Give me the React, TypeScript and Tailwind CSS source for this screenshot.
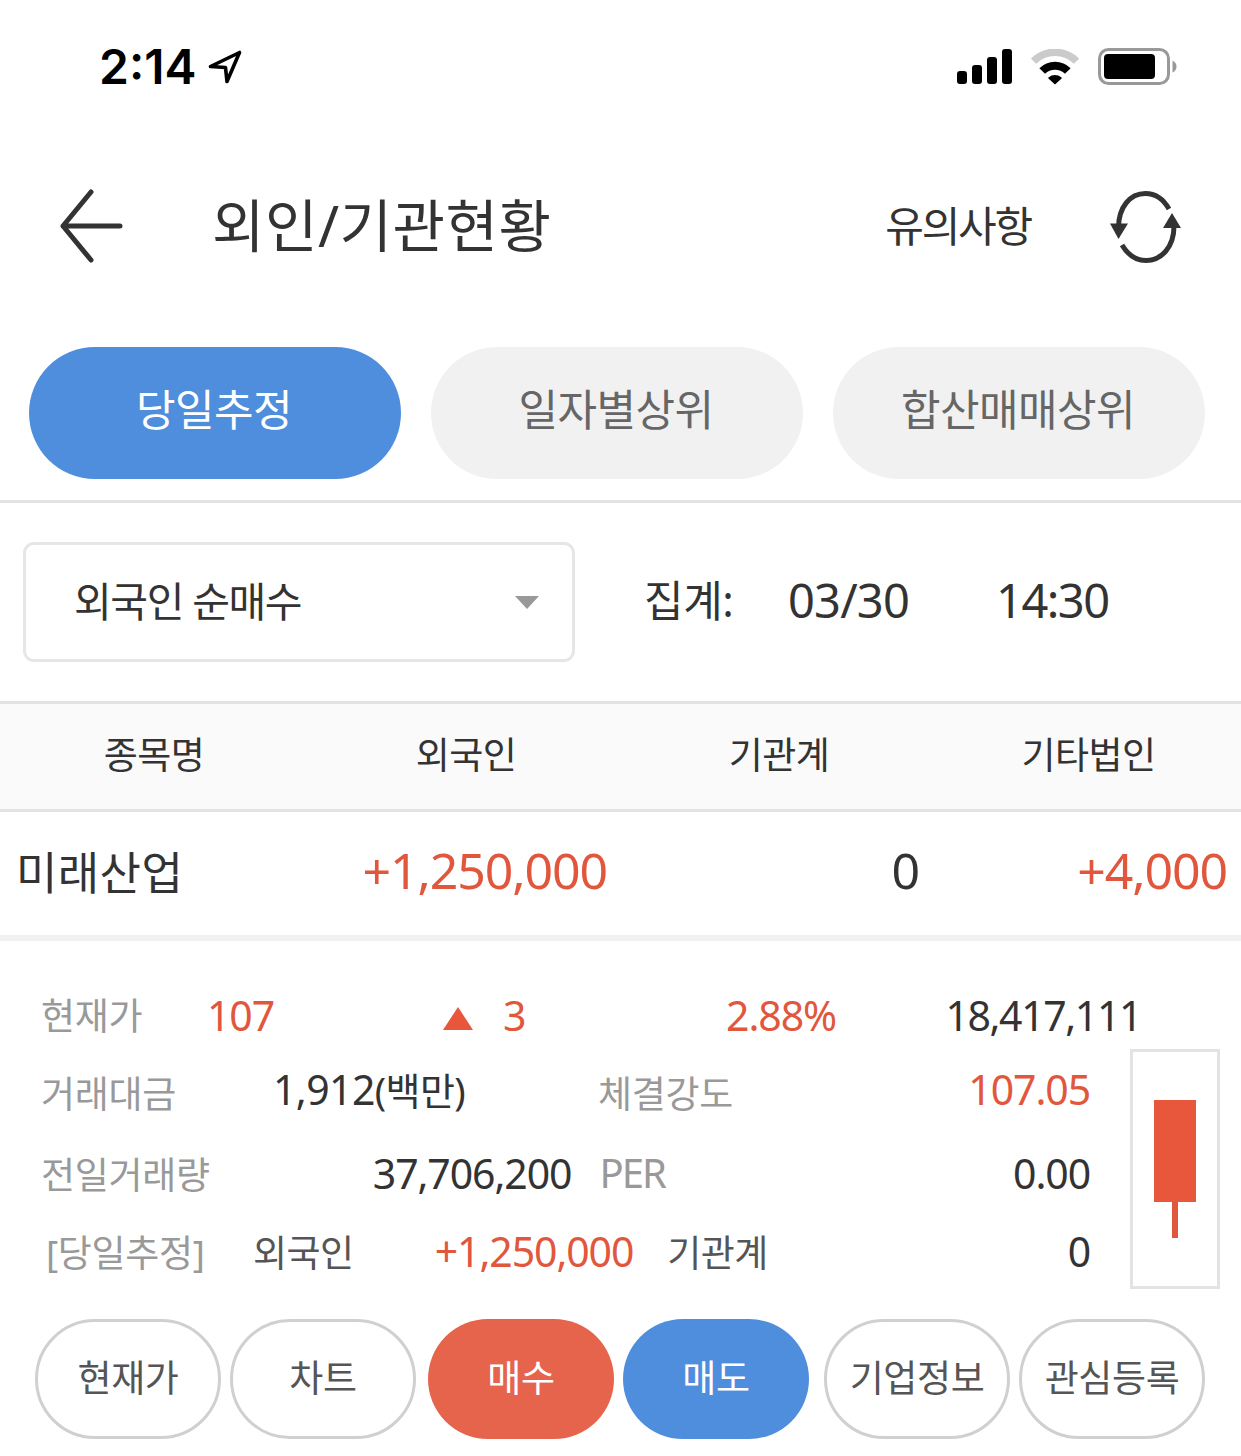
import React from "react";
import { clsx } from "clsx";

type TabItem = { label: string; active?: boolean };
type Action = { label: string; kind?: "buy" | "sell"; className: string };

const tabs: TabItem[] = [
  { label: "당일추정", active: true },
  { label: "일자별상위" },
  { label: "합산매매상위" },
];

const actions: Action[] = [
  { label: "현재가", className: "" },
  { label: "차트", className: "ml-[9px]" },
  { label: "매수", kind: "buy", className: "ml-3" },
  { label: "매도", kind: "sell", className: "ml-[9px]" },
  { label: "기업정보", className: "ml-[15px]" },
  { label: "관심등록", className: "ml-[9px]" },
];

function StatusBar() {
  return (
    <div className="flex h-[132px] items-center pl-[99px] pr-16 pt-[2px]">
      <span className="font-['Inter',sans-serif] text-[48px] font-semibold leading-[58px] tracking-[0px] text-black">2:14</span>
      <svg className="ml-[12px]" width="35" height="36" viewBox="0 0 35 36" fill="none" stroke="#000" strokeWidth="3.6" strokeLinejoin="round">
        <path d="M2.5 17.5 31.5 3.5 19 32.500 17.5 18.5Z" />
      </svg>
      <div className="ml-auto flex items-center">
        <svg width="56" height="36" viewBox="0 0 56 36">
          <rect x="0" y="22" width="10" height="13" rx="3" />
          <rect x="15" y="16" width="10" height="19" rx="3" />
          <rect x="30" y="8" width="10" height="27" rx="3" />
          <rect x="45" y="0" width="10" height="35" rx="3" />
        </svg>
        <svg className="ml-[18px]" width="48" height="36" viewBox="0 0 48 36" fill="none">
          <path d="M2.5 12.2A30.500 30.500 0 0 1 45.500 12.200" stroke="#cbcbcb" strokeWidth="7.500" />
          <path d="M11.200 22A18 18 0 0 1 36.800 22" stroke="#000" strokeWidth="8" />
          <path d="M24 35.500 17.400 29.500Q17 28.800 17.800 28.200A9.500 9.500 0 0 1 30.200 28.200Q31 28.800 30.600 29.500Z" fill="#000" />
        </svg>
        <svg className="ml-[19px]" width="79" height="38" viewBox="0 0 79 38">
          <rect x="1.500" y="1.500" width="69" height="34" rx="9" fill="none" stroke="#999" strokeWidth="3" />
          <rect x="6" y="6" width="51" height="25" rx="4" />
          <path d="M74.500 12.500Q78.500 14.500 78.500 18.500T74.500 24.500Z" fill="#999" />
        </svg>
      </div>
    </div>
  );
}

function Header() {
  return (
    <header className="flex h-[190px] items-center pb-[2px] pl-[59px] pr-[60px]">
      <svg width="65" height="76" viewBox="0 0 65 76" fill="none" stroke="#333" strokeWidth="5" strokeLinecap="round" strokeLinejoin="round">
        <path d="M32 4 4 38 32 72M4 38H61" />
      </svg>
      <h1 className="ml-[88px] pb-[2px] text-[57px] leading-[70px] tracking-[0.5px] text-[#333]">외인/기관현황</h1>
      <span className="ml-auto text-[42px] leading-[50px] tracking-[-2.2px] text-[#333]">유의사항</span>
      <svg className="ml-[78px] mt-[2px]" width="72" height="76" viewBox="0 0 72 76" fill="none" stroke="#333" strokeWidth="5">
        <path d="M9.500 39C9.500 18 21 4.500 36.500 4.500C46 4.500 54 9.500 60 20" />
        <path d="M65 37C65 58 52.500 71.500 37 71.500C28 71.500 19 66 13 56" />
        <path d="M1 34.500H19L9.500 50Z" fill="#333" stroke="none" />
        <path d="M54 39H72L63 24Z" fill="#333" stroke="none" />
      </svg>
    </header>
  );
}

function Tabs() {
  return (
    <nav className="flex h-[181px] gap-[30px] border-b-[3px] border-[#e3e3e3] pl-[29px] pt-[25px]">
      {tabs.map((tab) => (
        <button
          key={tab.label}
          className={clsx(
            "h-[132px] w-[372px] rounded-full pb-1.5 pr-0.5 text-[43px] leading-[50px] tracking-[-0.6px]",
            tab.active ? "bg-[#4f8edc] text-white" : "bg-[#f1f1f1] text-[#666]"
          )}
        >
          {tab.label}
        </button>
      ))}
    </nav>
  );
}

function Filter() {
  return (
    <div className="flex h-[198px] items-center pl-[23px] text-[#333]">
      <button className="flex h-[120px] w-[552px] items-center justify-between rounded-[11px] border-[3px] border-[#e6e6e6] pl-[48px] pr-[33px]">
        <span className="pb-[2px] text-[41px] leading-[50px] tracking-[-1.4px]">외국인 순매수</span>
        <svg width="24" height="13" viewBox="0 0 24 13">
          <path d="M0 0H24L12 13Z" fill="#999" />
        </svg>
      </button>
      <span className="ml-[69px] w-[144px] pb-[3px] text-[43px] leading-[50px] tracking-[-0.4px]">집계:</span>
      <span className="w-[208px] pb-[5px] text-[47px] leading-[50px] tracking-[-0.8px]">03/30</span>
      <span className="pb-[5px] text-[47px] leading-[50px] tracking-[-1.5px]">14:30</span>
    </div>
  );
}

function InvestorTable() {
  return (
    <section>
      <div className="grid h-[111px] grid-cols-[308px_316px_310px_309px] items-center border-y-[3px] border-[#e3e3e3] bg-[#fafafa] pb-[3px] text-center text-[37px] leading-[50px] tracking-[-0.6px] text-[#333]">
        <span>종목명</span>
        <span>외국인</span>
        <span>기관계</span>
        <span>기타법인</span>
      </div>
      <div className="grid h-[129px] grid-cols-[308px_299px_312px_308px] items-center border-b-[6px] border-[#f1f1f1] text-right text-[50px] leading-[60px] tracking-[-1.1px] text-[#333]">
        <span className="pb-[2px] pl-4 text-left text-[45px] tracking-[0.4px]">미래산업</span>
        <span className="pb-[7px] text-[#e1573d]">+1,250,000</span>
        <span className="pb-[7px]">0</span>
        <span className="pb-[7px] text-[#e1573d]">+4,000</span>
      </div>
    </section>
  );
}

function Candle() {
  return (
    <svg className="mt-[6px]" width="90" height="240" viewBox="0 0 90 240">
      <rect x="1.500" y="1.500" width="87" height="237" fill="#fff" stroke="#e3e3e3" strokeWidth="3" />
      <rect x="24" y="51" width="42" height="102" fill="#e8563b" />
      <rect x="42" y="153" width="6" height="36" fill="#e1573d" />
    </svg>
  );
}

const labelClass = "text-[37px] tracking-[-0.3px] text-[#999]";

function Detail() {
  return (
    <section className="h-[378px] pt-[50px] text-[41px] leading-[50px] tracking-[-1.1px] text-[#333]">
      <div className="flex h-[52px] items-center pl-[41px]">
        <span className={clsx(labelClass, "w-[166px] pb-[2px]")}>현재가</span>
        <span className="w-[236px] pb-[5px] text-[#e1573d]">107</span>
        <svg className="mt-[3px]" width="30" height="23" viewBox="0 0 30 23">
          <path d="M15 0 30 23H0Z" fill="#e8563b" />
        </svg>
        <span className="ml-[30px] pb-[5px] text-[#e1573d]">3</span>
        <span className="ml-auto pb-[5px] text-[#e1573d]">2.88%</span>
        <span className="mr-[100px] w-[305px] pb-[5px] text-right tracking-[-1.4px]">18,417,111</span>
      </div>
      <div className="flex">
        <div className="w-[1130px] pl-[41px]">
          <div className="flex h-[97px] items-center">
            <span className={clsx(labelClass, "w-[232px] pt-1")}>거래대금</span>
            <span className="w-[325px] pb-[5px] tracking-[-0.6px]">
              1,912<span className="text-[38px]">(백만)</span>
            </span>
            <span className={clsx(labelClass, "pt-1")}>체결강도</span>
            <span className="ml-auto mr-10 pb-[5px] text-[#e1573d]">107.05</span>
          </div>
          <div className="flex h-[66px] items-center">
            <span className={clsx(labelClass, "pt-1")}>전일거래량</span>
            <span className="ml-auto w-[300px] text-right">37,706,200</span>
            <span className="ml-7 text-[40px] tracking-[-1.9px] text-[#999]">PER</span>
            <span className="mr-10 w-[425px] text-right">0.00</span>
          </div>
          <div className="flex h-[92px] items-center">
            <span className={clsx(labelClass, "ml-[5px] w-[207px] pt-[2px]")}>[당일추정]</span>
            <span className="pt-[2px] text-[37px] tracking-[-0.6px] text-[#555]">외국인</span>
            <span className="w-[280px] pb-[2px] text-right text-[#e1573d]">+1,250,000</span>
            <span className="ml-[34px] pt-[2px] text-[37px] tracking-[-0.6px] text-[#555]">기관계</span>
            <span className="ml-auto mr-10 pb-[2px]">0</span>
          </div>
        </div>
        <Candle />
      </div>
    </section>
  );
}

function Actions() {
  return (
    <div className="flex pl-[35px]">
      {actions.map((action) => (
        <button
          key={action.label}
          className={clsx(
            "h-[120px] w-[186px] shrink-0 rounded-full pb-[3px] text-[37px] leading-[50px] tracking-[-0.4px]",
            action.kind === "buy" && "bg-[#e6644c] text-white",
            action.kind === "sell" && "bg-[#4f8edc] text-white",
            !action.kind && "border-[3px] border-[#d0d0d0] text-[#555]",
            action.className
          )}
        >
          {action.label}
        </button>
      ))}
    </div>
  );
}

export default function App() {
  return (
    <main className="h-[1456px] w-[1241px] overflow-hidden whitespace-nowrap bg-white font-['Noto_Sans','Noto_Sans_CJK_KR',sans-serif]">
      <StatusBar />
      <Header />
      <Tabs />
      <Filter />
      <InvestorTable />
      <Detail />
      <Actions />
    </main>
  );
}
